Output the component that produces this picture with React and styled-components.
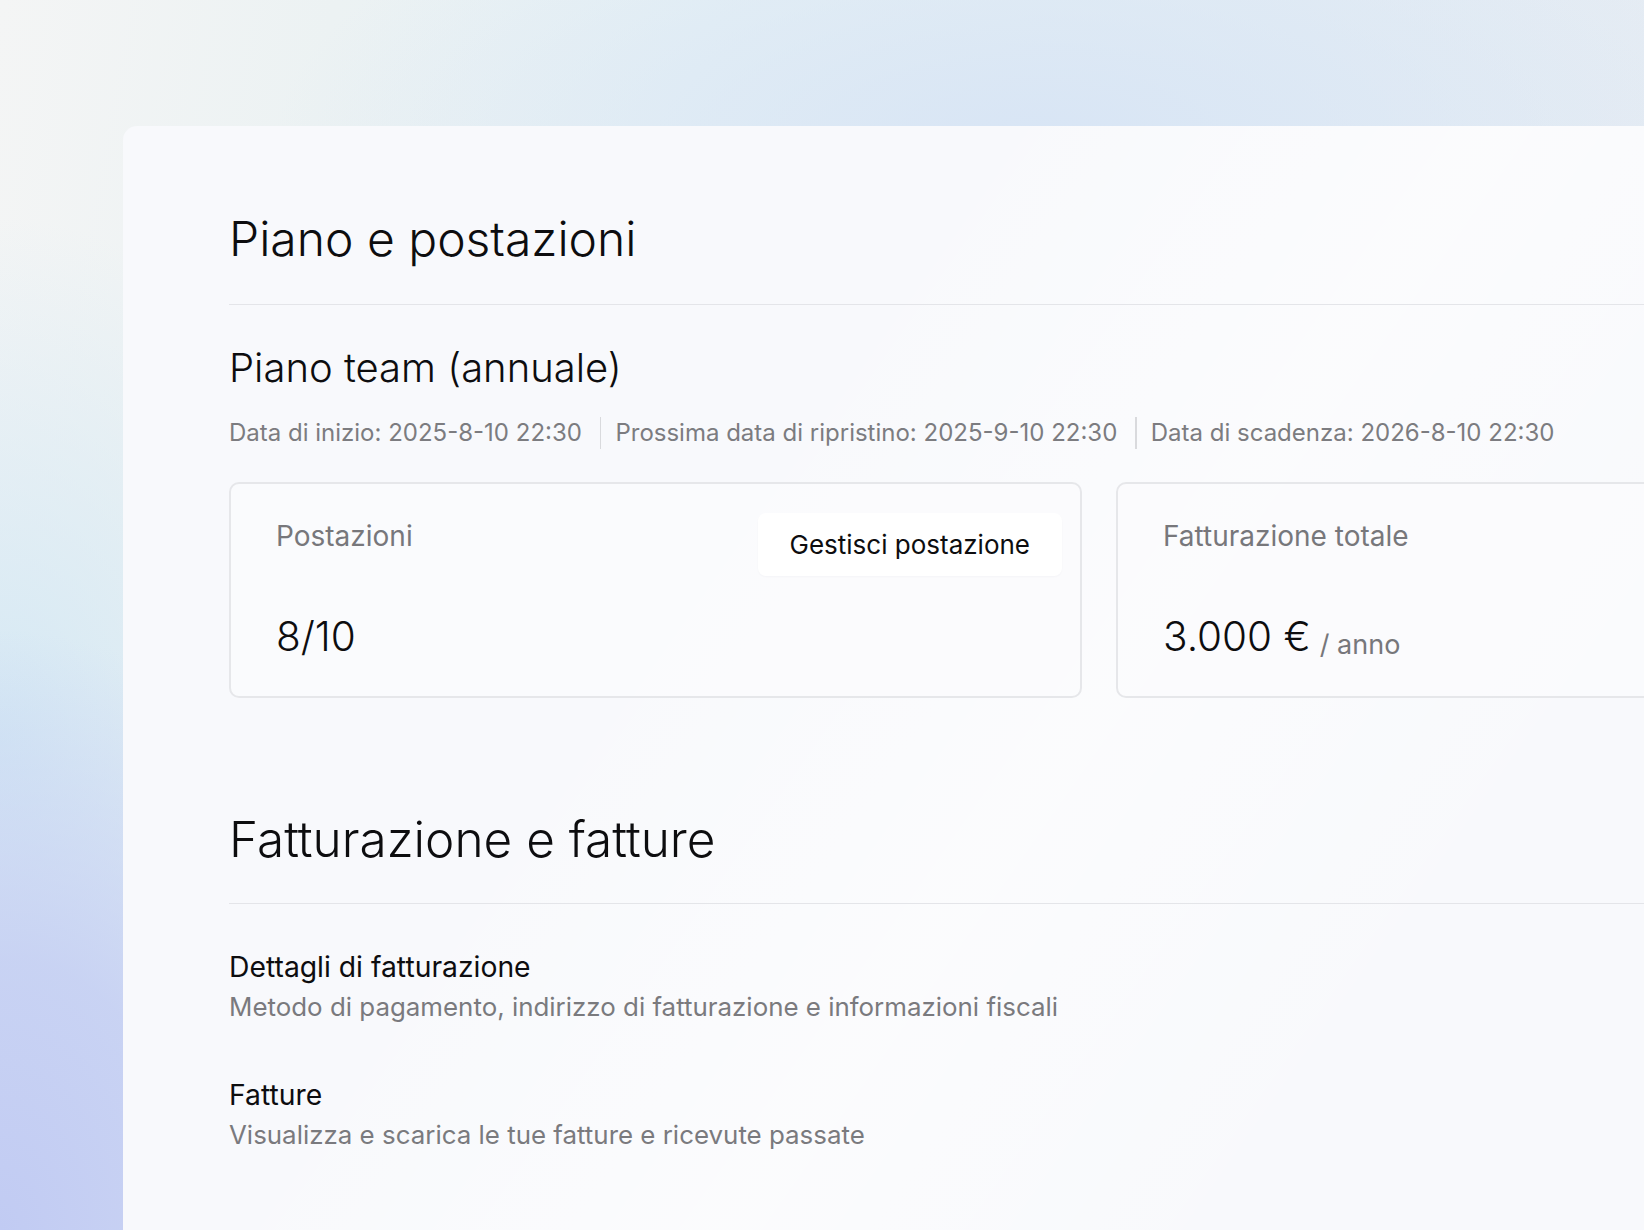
import React from "react";
import styled, { createGlobalStyle } from "styled-components";

const Global = createGlobalStyle`
  html, body { margin: 0; padding: 0; }
  body {
    width: 1644px;
    height: 1230px;
    overflow: hidden;
    font-family: Inter, "Noto Sans", "Liberation Sans", sans-serif;
    color: #0e0e10;
    background:
      radial-gradient(ellipse 440px 600px at 0% 100%, rgba(193, 203, 243, 1) 0%, rgba(196, 206, 243, 0.85) 45%, rgba(200, 212, 243, 0) 100%),
      radial-gradient(ellipse 380px 520px at 0% 60%, rgba(212, 232, 244, 1) 0%, rgba(214, 233, 244, 0) 100%),
      radial-gradient(ellipse 760px 300px at 63% 140px, rgba(216, 229, 245, 1) 0%, rgba(220, 232, 245, 0) 100%),
      linear-gradient(100deg, #f4f5f5 0%, #ecf2f3 18%, #e6f1f5 38%, #e4edf4 70%, #e7ecf3 100%);
  }
`;

const Page = styled.div`
  padding: 126px 0 0 123px;
  box-sizing: border-box;
  height: 1230px;
`;

const Panel = styled.main`
  width: 1900px;
  height: 1200px;
  box-sizing: border-box;
  padding: 84px 0 0 106px;
  border-radius: 14px 0 0 0;
  background:
    linear-gradient(125deg, rgba(255,255,255,0) 30%, rgba(255,255,255,0.45) 50%, rgba(255,255,255,0) 70%),
    #f8f9fc;
`;

const Section = styled.section`
  width: 1740px;
  margin-top: ${(p) => p.$top || 0}px;
`;

const SectionTitle = styled.h1`
  margin: 0;
  padding-bottom: ${(p) => p.$pad || 36}px;
  border-bottom: 1.5px solid #e4e5e9;
  font-size: ${(p) => p.$size || 48}px;
  line-height: 58px;
  font-weight: 300;
  color: #0d0d0f;
`;

const PlanTitle = styled.h2`
  margin: 40px 0 0;
  font-size: 40px;
  line-height: 46px;
  font-weight: 300;
  color: #0d0d0f;
`;

const MetaRow = styled.div`
  display: flex;
  align-items: center;
  margin-top: 26px;
  font-size: 24px;
  line-height: 32px;
  color: #7c7c80;
`;

const MetaSep = styled.span`
  width: 1.5px;
  height: 32px;
  margin: 0 14px 0 18px;
  background: #d9dadd;
`;

const CardGrid = styled.div`
  display: grid;
  grid-template-columns: 853px 853px;
  gap: 34px;
  margin-top: 33px;
`;

const Card = styled.div`
  box-sizing: border-box;
  height: 216px;
  padding: 29px 18px 0 45px;
  border: 2px solid #e6e7ea;
  border-radius: 10px;
  background: rgba(251, 252, 254, 0.6);
`;

const CardHead = styled.div`
  display: flex;
  justify-content: space-between;
  align-items: flex-start;
  min-height: 63px;
`;

const CardLabel = styled.div`
  margin-top: 5px;
  font-size: 28px;
  line-height: 36px;
  color: #77777b;
`;

const GhostButton = styled.button`
  height: 63px;
  padding: 0 32px;
  border: none;
  border-radius: 8px;
  background: #ffffff;
  box-shadow: 0 1px 2px rgba(20, 30, 60, 0.03);
  font-family: inherit;
  font-size: 26px;
  color: #0d0d0f;
  cursor: pointer;
`;

const CardValue = styled.div`
  margin-top: 37px;
  font-size: 40.5px;
  line-height: 48px;
  font-weight: 300;
  color: #0d0d0f;
`;

const Unit = styled.span`
  margin-left: 9px;
  font-size: 27px;
  font-weight: 400;
  color: #77777b;
  vertical-align: -3px;
`;

const ItemList = styled.div`
  display: flex;
  flex-direction: column;
  gap: 53px;
  margin-top: 45px;
`;

const Item = styled.div`
  display: flex;
  flex-direction: column;
  gap: 5px;
`;

const ItemTitle = styled.div`
  font-size: 28.3px;
  line-height: 36px;
  color: #0d0d0f;
`;

const ItemDesc = styled.div`
  font-size: 25.9px;
  line-height: 34px;
  color: #7a7a7e;
`;

const meta = [
  "Data di inizio: 2025-8-10 22:30",
  "Prossima data di ripristino: 2025-9-10 22:30",
  "Data di scadenza: 2026-8-10 22:30",
];

const items = [
  {
    title: "Dettagli di fatturazione",
    desc: "Metodo di pagamento, indirizzo di fatturazione e informazioni fiscali",
  },
  {
    title: "Fatture",
    desc: "Visualizza e scarica le tue fatture e ricevute passate",
  },
];

export default function App() {
  return (
    <>
      <Global />
      <Page>
        <Panel>
          <Section>
            <SectionTitle>Piano e postazioni</SectionTitle>
            <PlanTitle>Piano team (annuale)</PlanTitle>
            <MetaRow>
              {meta.map((m, i) => (
                <React.Fragment key={m}>
                  {i > 0 && <MetaSep />}
                  <span>{m}</span>
                </React.Fragment>
              ))}
            </MetaRow>
            <CardGrid>
              <Card>
                <CardHead>
                  <CardLabel>Postazioni</CardLabel>
                  <GhostButton>Gestisci postazione</GhostButton>
                </CardHead>
                <CardValue>8/10</CardValue>
              </Card>
              <Card>
                <CardHead>
                  <CardLabel>Fatturazione totale</CardLabel>
                </CardHead>
                <CardValue>
                  3.000 €<Unit>/ anno</Unit>
                </CardValue>
              </Card>
            </CardGrid>
          </Section>
          <Section $top={112}>
            <SectionTitle $size={49.5} $pad={35}>Fatturazione e fatture</SectionTitle>
            <ItemList>
              {items.map((it) => (
                <Item key={it.title}>
                  <ItemTitle>{it.title}</ItemTitle>
                  <ItemDesc>{it.desc}</ItemDesc>
                </Item>
              ))}
            </ItemList>
          </Section>
        </Panel>
      </Page>
    </>
  );
}
